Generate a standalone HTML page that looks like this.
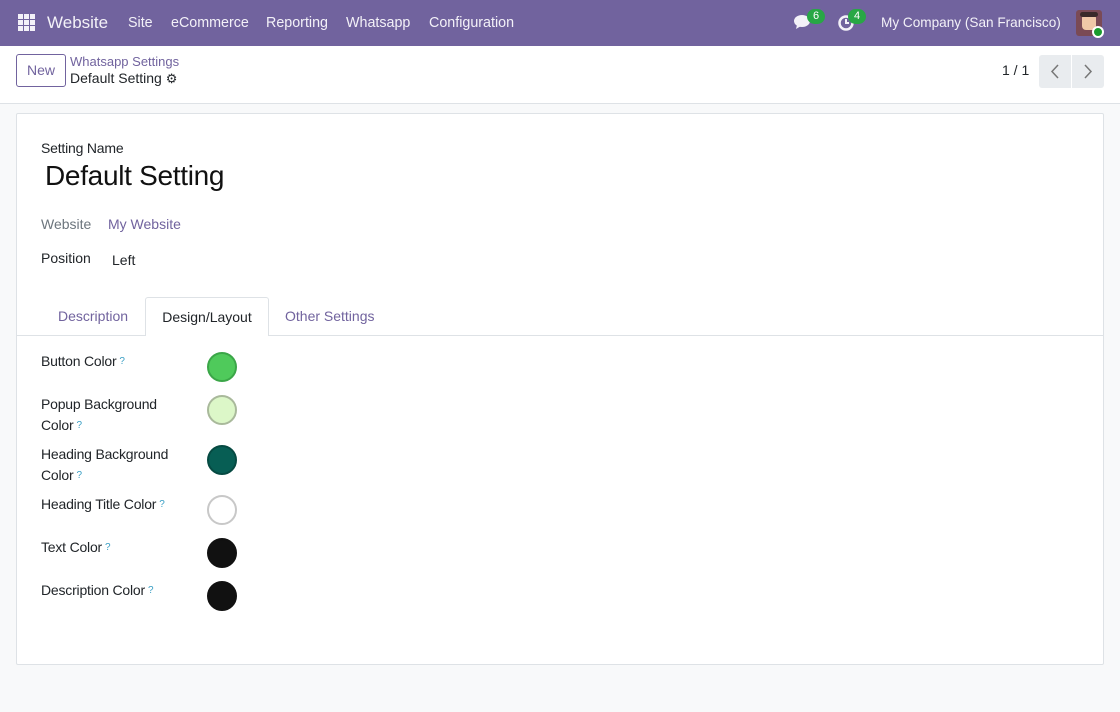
<!DOCTYPE html>
<html><head><meta charset="utf-8"><style>
*{box-sizing:border-box;margin:0;padding:0}
body{width:1120px;height:712px;background:#f8f9fa;font-family:"Liberation Sans",sans-serif;color:#212529;font-size:14px;position:relative;overflow:hidden}
.nav{position:absolute;left:0;top:0;width:1120px;height:46px;background:#71639e;color:#fff}
.nav span{position:absolute;top:15px;font-size:14.3px;color:#f3f1f8}
.cp{position:absolute;left:0;top:46px;width:1120px;height:58px;background:#fff;border-bottom:1px solid #dee2e6}
.card{position:absolute;left:16px;top:113px;width:1088px;height:552px;background:#fff;border:1px solid #dee2e6;border-radius:2px}
.abs{position:absolute}
.lbl{position:absolute;left:24px;font-size:14px;color:#212529;line-height:21px;letter-spacing:-0.2px}
.q{color:#3b9fc4;font-size:10px;vertical-align:top;margin-left:3px}
.dot{position:absolute;left:190px;width:30px;height:30px;border-radius:50%;border:2px solid}
</style></head><body>
<div class="nav">
 <svg class="abs" style="left:18px;top:14px" width="17" height="17" viewBox="0 0 17 17" fill="#f3f1f8"><rect x="0" y="0" width="5" height="5"/><rect x="6" y="0" width="5" height="5"/><rect x="12" y="0" width="5" height="5"/><rect x="0" y="6" width="5" height="5"/><rect x="6" y="6" width="5" height="5"/><rect x="12" y="6" width="5" height="5"/><rect x="0" y="12" width="5" height="5"/><rect x="6" y="12" width="5" height="5"/><rect x="12" y="12" width="5" height="5"/></svg>
 <span style="left:47px;font-size:17px;top:13px">Website</span>
 <span style="left:128px">Site</span>
 <span style="left:171px">eCommerce</span>
 <span style="left:266px">Reporting</span>
 <span style="left:346px">Whatsapp</span>
 <span style="left:429px">Configuration</span>
 <svg class="abs" style="left:794px;top:14px" width="20" height="16" viewBox="0 0 20 16" fill="#f3f1f8"><ellipse cx="8" cy="7" rx="8" ry="6"/><path d="M3 11 L2 15 L7 12Z"/></svg>
 <div class="abs" style="left:807px;top:9px;width:18px;height:15px;border-radius:8px;background:#28a745;font-size:11px;text-align:center;line-height:15px">6</div>
 <svg class="abs" style="left:838px;top:14px" width="18" height="18" viewBox="0 0 18 18"><circle cx="8" cy="9" r="6.5" fill="none" stroke="#f3f1f8" stroke-width="2.5"/><path d="M8 5v4h3" stroke="#f3f1f8" stroke-width="2" fill="none"/></svg>
 <div class="abs" style="left:848px;top:9px;width:18px;height:15px;border-radius:8px;background:#28a745;font-size:11px;text-align:center;line-height:15px">4</div>
 <span style="left:881px;font-size:13.6px;top:15px">My Company (San Francisco)</span>
 <div class="abs" style="left:1076px;top:10px;width:26px;height:26px;border-radius:3px;background:#7a4a55"><div style="position:absolute;left:6px;top:4px;width:14px;height:16px;background:#f0c8a8;border-radius:4px"></div><div style="position:absolute;left:4px;top:2px;width:18px;height:5px;background:#3a2a2a;border-radius:3px"></div></div>
 <div class="abs" style="left:1092px;top:26px;width:12px;height:12px;border-radius:50%;background:#1a9c2e;border:2px solid #fff"></div>
</div>
<div class="cp">
 <div class="abs" style="left:16px;top:8px;width:50px;height:33px;border:1px solid #71639e;border-radius:3px;color:#71639e;font-size:14px;text-align:center;line-height:31px">New</div>
 <div class="abs" style="left:70px;top:8px;font-size:13px;color:#71639e">Whatsapp Settings</div>
 <div class="abs" style="left:70px;top:24px;font-size:14px">Default Setting <span style="font-size:13px">&#9881;</span></div>
 <div class="abs" style="left:1002px;top:16px;font-size:14px">1 / 1</div>
 <div class="abs" style="left:1039px;top:9px;width:32px;height:33px;background:#e9ecef;border-radius:3px 0 0 3px"><svg width="32" height="33" viewBox="0 0 32 33"><path d="M19 10 L13 16.5 L19 23" stroke="#777" stroke-width="1.5" fill="none"/></svg></div>
 <div class="abs" style="left:1072px;top:9px;width:32px;height:33px;background:#e9ecef;border-radius:0 3px 3px 0"><svg width="32" height="33" viewBox="0 0 32 33"><path d="M13 10 L19 16.5 L13 23" stroke="#777" stroke-width="1.5" fill="none"/></svg></div>
</div>
<div class="card">
 <div class="abs" style="left:24px;top:26px;font-size:14px;letter-spacing:-0.2px">Setting Name</div>
 <div class="abs" style="left:28px;top:46px;font-size:28px;color:#111;letter-spacing:-0.3px">Default Setting</div>
 <div class="abs" style="left:24px;top:102px;color:#6c757d">Website</div>
 <div class="abs" style="left:91px;top:102px;color:#71639e">My Website</div>
 <div class="abs" style="left:24px;top:136px">Position</div>
 <div class="abs" style="left:95px;top:138px">Left</div>
 <div class="abs" style="left:0;top:221px;width:1086px;border-top:1px solid #dee2e6"></div>
 <div class="abs" style="left:41px;top:194px;color:#71639e">Description</div>
 <div class="abs" style="left:128px;top:183px;width:124px;height:39px;background:#fff;border:1px solid #dee2e6;border-bottom:none;border-radius:3px 3px 0 0;text-align:center;line-height:38px">Design/Layout</div>
 <div class="abs" style="left:268px;top:194px;color:#71639e">Other Settings</div>
 <div class="lbl" style="top:237px">Button Color<span class="q">?</span></div>
 <div class="dot" style="top:238px;background:#4fca5b;border-color:#3ba648"></div>
 <div class="lbl" style="top:280px">Popup Background<br>Color<span class="q">?</span></div>
 <div class="dot" style="top:281px;background:#dcf7c8;border-color:#a9b99b"></div>
 <div class="lbl" style="top:330px">Heading Background<br>Color<span class="q">?</span></div>
 <div class="dot" style="top:331px;background:#075e54;border-color:#064a42"></div>
 <div class="lbl" style="top:380px">Heading Title Color<span class="q">?</span></div>
 <div class="dot" style="top:381px;background:#fff;border-color:#c8c8c8"></div>
 <div class="lbl" style="top:423px">Text Color<span class="q">?</span></div>
 <div class="dot" style="top:424px;background:#111;border-color:#111"></div>
 <div class="lbl" style="top:466px">Description Color<span class="q">?</span></div>
 <div class="dot" style="top:467px;background:#111;border-color:#111"></div>
</div>
</body></html>
